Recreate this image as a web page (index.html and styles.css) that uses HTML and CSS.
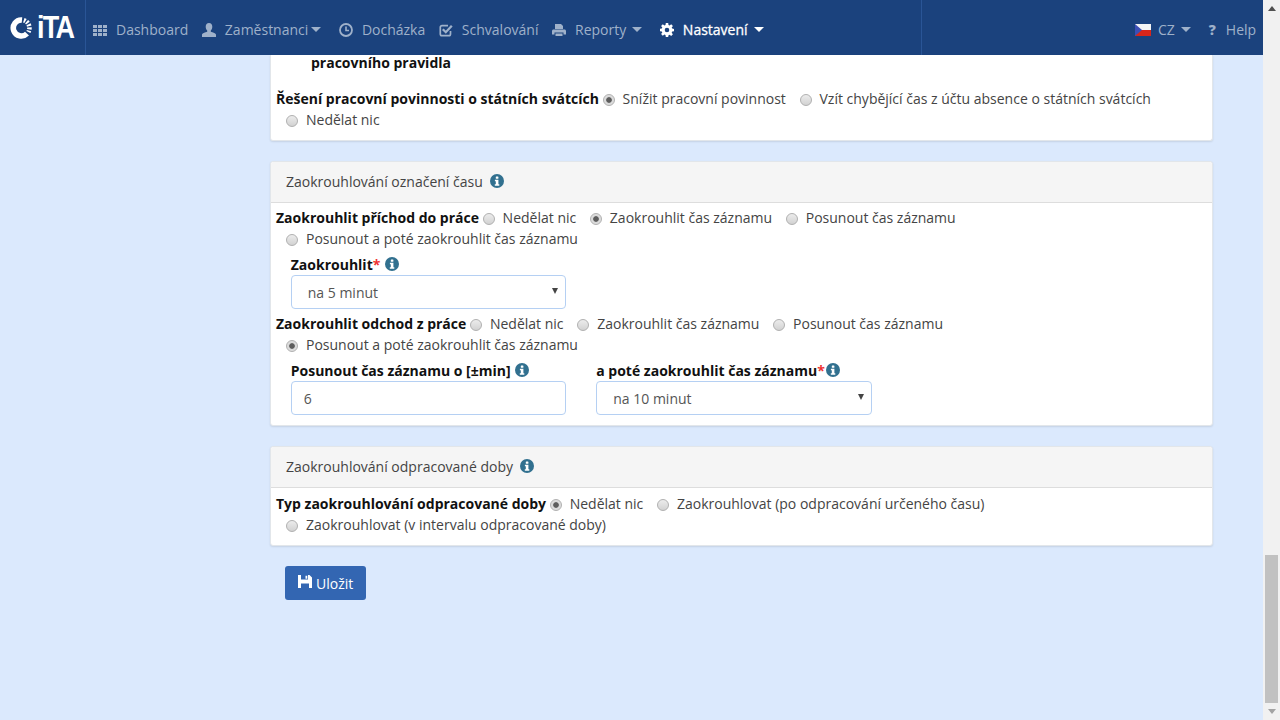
FILE: index.html
```html
<!DOCTYPE html>
<html lang="cs">
<head>
<meta charset="utf-8">
<title>Nastavení</title>
<link rel="stylesheet" href="styles.css">
</head>
<body>
<svg class="defs" width="0" height="0" aria-hidden="true">
  <defs>
    <symbol id="i-info" viewBox="0 0 14 14">
      <circle cx="7" cy="7" r="7" fill="currentColor"/>
      <rect x="5.8" y="2.4" width="2.6" height="2.3" rx=".5" fill="#fff"/>
      <path d="M4.9 5.8h3.5v4.4h.9v1.5H4.8v-1.5h1V7.3h-.9z" fill="#fff"/>
    </symbol>
    <symbol id="i-save" viewBox="0 0 14 14">
      <path fill-rule="evenodd" d="M0 0H11.500L14 2.500V13H0ZM3 0V4.500H10V0ZM7.500 .8H9.300V3.700H7.500ZM3 8.500V13H11V8.500Z" fill="currentColor"/>
    </symbol>
  </defs>
</svg>
<div class="window">
  <div class="page">
    <header class="navbar">
      <div class="brand">
        <svg class="ring" width="22" height="22" viewBox="0 0 22 22">
          <path d="M12 3A8 8 0 1 0 17 16.6" fill="none" stroke="#fff" stroke-width="5.6"/>
          <path d="M13.8 3.2A8.2 8.2 0 0 1 18.4 15" fill="none" stroke="#fff" stroke-width="4.6" stroke-dasharray="1.9 1.3"/>
        </svg>
        <span class="logo-text">iTA</span>
      </div>
      <nav class="nav-main">
        <a class="nav-item">
          <svg class="nav-icon" viewBox="0 0 14 14"><path fill="currentColor" d="M0 2h4v3H0zM5 2h4v3H5zM10 2h4v3h-4zM0 6h4v3H0zM5 6h4v3H5zM10 6h4v3h-4zM0 10h4v3H0zM5 10h4v3H5zM10 10h4v3h-4z"/></svg>
          Dashboard
        </a>
        <a class="nav-item">
          <svg class="nav-icon" viewBox="0 0 14 14"><path fill="currentColor" d="M7 0c2.1 0 3.3 1.6 3.3 3.7 0 1.5-.6 3-1.5 3.800v1.200c1.800.6 5.200 1.500 5.200 3.100V14H0v-2.200c0-1.600 3.400-2.500 5.200-3.100V7.500c-.9-.8-1.500-2.300-1.500-3.800C3.700 1.600 4.900 0 7 0z"/></svg>
          Zaměstnanci<span class="caret tight"></span>
        </a>
        <a class="nav-item">
          <svg class="nav-icon" viewBox="0 0 14 14"><circle cx="7" cy="7" r="6" fill="none" stroke="currentColor" stroke-width="1.8"/><path d="M7 3.500V7.500H10" fill="none" stroke="currentColor" stroke-width="1.600"/></svg>
          Docházka
        </a>
        <a class="nav-item">
          <svg class="nav-icon" viewBox="0 0 14 14"><path fill="none" stroke="currentColor" stroke-width="1.700" d="M11.500 8v3a1.700 1.700 0 0 1-1.700 1.700H3A1.700 1.700 0 0 1 1.300 11V4.300A1.700 1.700 0 0 1 3 2.600h6"/><path fill="none" stroke="currentColor" stroke-width="2.300" d="M3.800 6.200 6.800 9.200 12.800 2.800"/></svg>
          Schvalování
        </a>
        <a class="nav-item">
          <svg class="nav-icon" viewBox="0 0 14 14"><path fill="currentColor" d="M3 1h6l2 2v3H3zM1.500 6.500h11c.8 0 1.500.7 1.500 1.500v3.500h-2.500V9.500h-9v2H0V8c0-.8.7-1.500 1.500-1.500zM3.500 10.500h7V13h-7z"/></svg>
          Reporty<span class="caret"></span>
        </a>
        <a class="nav-item active">
          <svg class="nav-icon" viewBox="0 0 14 14"><path fill="currentColor" fill-rule="evenodd" d="M5.800 0h2.400l.3 1.900 1.100.5L11.200 1.200l1.700 1.700-1.200 1.600.5 1.100 1.800.3v2.400l-1.800.3-.5 1.100 1.200 1.600-1.700 1.700-1.600-1.200-1.100.5L8.200 14H5.800l-.3-1.900-1.100-.5-1.600 1.200-1.700-1.700 1.200-1.600-.5-1.100L0 8.200V5.800l1.800-.3.500-1.100L1.100 2.900l1.700-1.700 1.600 1.200 1.100-.5zM7 4.700a2.300 2.300 0 1 0 0 4.600 2.300 2.300 0 0 0 0-4.600z"/></svg>
          Nastavení<span class="caret"></span>
        </a>
      </nav>
      <div class="nav-side">
        <a class="nav-item lang">
          <svg class="flag" width="16" height="12" viewBox="0 0 16 12"><rect width="16" height="6" fill="#f4f4f4"/><rect y="6" width="16" height="6" fill="#d7261b"/><path d="M0 0 7 6 0 12z" fill="#3c4fb5"/></svg>
          CZ<span class="caret"></span>
        </a>
        <a class="nav-item help"><span class="help-mark">?</span>Help</a>
      </div>
    </header>

    <main class="content">
      <section class="card card-top">
        <p class="cut-line">pracovního pravidla</p>
        <div class="radio-row">
          <span class="row-label">Řešení pracovní povinnosti o státních svátcích</span>
          <label class="opt"><input type="radio" name="a" checked>Snížit pracovní povinnost</label>
          <label class="opt"><input type="radio" name="a">Vzít chybějící čas z účtu absence o státních svátcích</label>
          <label class="opt"><input type="radio" name="a">Nedělat nic</label>
        </div>
      </section>

      <section class="card">
        <h2 class="card-head">Zaokrouhlování označení času <svg class="info head-info"><use href="#i-info"/></svg></h2>
        <div class="card-body">
          <div class="radio-row">
            <span class="row-label">Zaokrouhlit příchod do práce</span>
            <label class="opt"><input type="radio" name="b">Nedělat nic</label>
            <label class="opt"><input type="radio" name="b" checked>Zaokrouhlit čas záznamu</label>
            <label class="opt"><input type="radio" name="b">Posunout čas záznamu</label>
            <label class="opt"><input type="radio" name="b">Posunout a poté zaokrouhlit čas záznamu</label>
          </div>
          <div class="fields">
            <div class="field">
              <div class="field-label">Zaokrouhlit<span class="req">*</span> <svg class="info"><use href="#i-info"/></svg></div>
              <div class="select-wrap"><select class="control select"><option>na 5 minut</option></select></div>
            </div>
          </div>
          <div class="radio-row">
            <span class="row-label">Zaokrouhlit odchod z práce</span>
            <label class="opt"><input type="radio" name="c">Nedělat nic</label>
            <label class="opt"><input type="radio" name="c">Zaokrouhlit čas záznamu</label>
            <label class="opt"><input type="radio" name="c">Posunout čas záznamu</label>
            <label class="opt"><input type="radio" name="c" checked>Posunout a poté zaokrouhlit čas záznamu</label>
          </div>
          <div class="fields">
            <div class="field">
              <div class="field-label">Posunout čas záznamu o [±min] <svg class="info"><use href="#i-info"/></svg></div>
              <input class="control" type="text" value="6">
            </div>
            <div class="field">
              <div class="field-label">a poté zaokrouhlit čas záznamu<span class="req">*</span><svg class="info"><use href="#i-info"/></svg></div>
              <div class="select-wrap"><select class="control select"><option>na 10 minut</option></select></div>
            </div>
          </div>
        </div>
      </section>

      <section class="card">
        <h2 class="card-head">Zaokrouhlování odpracované doby <svg class="info head-info"><use href="#i-info"/></svg></h2>
        <div class="card-body last">
          <div class="radio-row">
            <span class="row-label">Typ zaokrouhlování odpracované doby</span>
            <label class="opt"><input type="radio" name="d" checked>Nedělat nic</label>
            <label class="opt"><input type="radio" name="d">Zaokrouhlovat (po odpracování určeného času)</label>
            <label class="opt"><input type="radio" name="d">Zaokrouhlovat (v intervalu odpracované doby)</label>
          </div>
        </div>
      </section>

      <button class="save" type="button"><svg class="save-icon"><use href="#i-save"/></svg>Uložit</button>
    </main>
  </div>
  <aside class="scrollbar" aria-hidden="true">
    <span class="arrow up"></span>
    <span class="track"><span class="thumb"></span></span>
    <span class="arrow down"></span>
  </aside>
</div>
</body>
</html>
```
FILE: styles.css
```css
* { box-sizing: border-box; }
html, body { margin: 0; height: 100%; overflow: hidden; }
body {
  font-family: "Open Sans", "Liberation Sans", sans-serif;
  font-size: 14px;
  line-height: 21px;
  color: #333;
  background: #dbe9fd;
}
.defs { display: block; height: 0; }
.window { display: flex; height: 720px; }
.page { width: 1263px; display: flex; flex-direction: column; overflow: hidden; }

/* navbar */
.navbar {
  height: 55px;
  flex: none;
  display: flex;
  align-items: center;
  background: #1b427d;
  color: #9fb1ca;
}
.brand {
  width: 86px;
  height: 55px;
  flex: none;
  display: flex;
  align-items: center;
  padding-left: 10px;
  border-right: 1px solid #2a5596;
}
.ring { flex: none; }
.logo-text {
  margin-left: 5px;
  font-family: "Liberation Sans", sans-serif;
  font-weight: 700;
  font-size: 31px;
  line-height: 22px;
  letter-spacing: -2px;
  color: #fff;
  transform: scaleX(.87);
  transform-origin: left center;
}
.nav-main { display: flex; height: 55px; align-items: center; padding: 4px 0 0 7px; width: 836px; border-right: 1px solid #2a5596; }
.nav-item { display: flex; align-items: center; margin-right: 13.6px; white-space: nowrap; }
.nav-icon { width: 14px; height: 14px; margin-right: 9px; flex: none; }
.nav-item.active { color: #fff; font-weight: 400; margin-left: 4px; -webkit-text-stroke: .3px #fff; }
.caret {
  width: 0;
  height: 0;
  margin-left: 6px;
  border-left: 5px solid transparent;
  border-right: 5px solid transparent;
  border-top: 5px solid currentColor;
}
.caret.tight { margin-left: 3px; margin-right: 4px; }
.nav-side { display: flex; align-items: center; height: 55px; flex: 1; padding: 4px 0 0 213px; }
.flag { margin-right: 7px; flex: none; }
.lang { margin-right: 18px; }
.help { margin-right: 0; }
.help-mark { width: 17px; font-weight: 800; }

/* content */
.content { flex: 1; padding: 0 50px 0 270px; }
.card {
  background: #fff;
  border: 1px solid #e2e6ea;
  border-radius: 3px;
  box-shadow: 0 1px 2px rgba(0, 0, 0, .1);
  margin-bottom: 20px;
}
.card-top { border-top: 0; padding: 0 5px 10px; border-radius: 0 0 3px 3px; height: 86px; }
.cut-line { margin: 0 0 17px 35px; font-weight: 700; line-height: 16px; color: #111; }
.card-head {
  margin: 0;
  height: 41px;
  padding: 0 15px 2px;
  display: flex;
  align-items: center;
  background: #f5f5f5;
  border-bottom: 1px solid #ddd;
  font-size: 14px;
  font-weight: 400;
  color: #444;
  border-radius: 3px 3px 0 0;
}
.card-body { padding: 4px 5px 6px; }
.card-body.last { padding: 5px 5px 10px; }
.radio-row { color: #444; }
.row-label { font-weight: 700; color: #111; }
.opt { display: inline; white-space: nowrap; }
.opt + .opt { margin-left: 10px; }
.opt input {
  appearance: none;
  -webkit-appearance: none;
  display: inline-block;
  width: 12px;
  height: 12px;
  margin: 0 8px 0 0;
  vertical-align: -2px;
  border-radius: 50%;
  border: 1px solid #b0b0b0;
  background: linear-gradient(#ececec, #d2d2d2);
}
.opt input:checked {
  background: radial-gradient(circle, #5d5d5d 0 2.4px, #d8d8d8 3.2px, #e6e6e6 100%);
}
.fields { display: flex; margin: 5px 0 4px -.25px; }
.field { width: 305.5px; padding: 0 15px; }
.field-label { height: 21px; font-weight: 700; color: #111; white-space: nowrap; }
.req { color: #e33; }
.info { width: 14px; height: 14px; color: #31708f; vertical-align: -1px; margin-left: 1px; }
.head-info { margin-left: 7.5px; }
.card-head .info { flex: none; }
.control {
  display: block;
  width: 100%;
  height: 34px;
  border: 1px solid #b5d0f3;
  border-radius: 4px;
  background: #fff;
  color: #555;
  font: inherit;
  padding: 0 12px;
}
.select-wrap { position: relative; }
.select { appearance: none; -webkit-appearance: none; padding-left: 16px; }
.select-wrap::after {
  content: "";
  position: absolute;
  right: 8px;
  top: 13px;
  border-left: 3px solid transparent;
  border-right: 3px solid transparent;
  border-top: 6px solid #444;
}

/* save */
.save {
  display: flex;
  align-items: center;
  margin-left: 15px;
  width: 81px;
  height: 34px;
  padding: 0 0 0 13px;
  border: 0;
  border-radius: 3px;
  background: #3366b2;
  color: #fff;
  font: inherit;
}
.save-icon { width: 14px; height: 14px; margin: -3px 4px 0 0; color: #fff; }

/* scrollbar */
.scrollbar {
  width: 17px;
  background: #f1f1f1;
  display: flex;
  flex-direction: column;
  align-items: center;
}
.arrow { width: 0; height: 0; flex: none; border-left: 4px solid transparent; border-right: 4px solid transparent; }
.arrow.up { margin-top: 6px; border-bottom: 5px solid #505050; }
.arrow.down { margin-bottom: 6px; border-top: 5px solid #a3a3a3; }
.track { flex: 1; width: 100%; display: flex; flex-direction: column; justify-content: flex-end; padding: 0 2px 6px; }
.thumb { display: block; height: 148px; background: #c1c1c1; }
```
